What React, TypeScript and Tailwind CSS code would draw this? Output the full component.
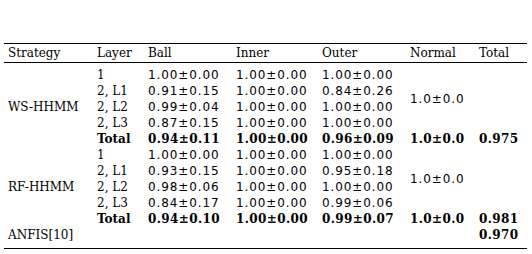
import React from 'react';

type Row = {
  layer: string;
  ball: string;
  inner: string;
  outer: string;
  bold?: boolean;
  total?: string;
};

const ws: Row[] = [
  { layer: '1', ball: '1.00±0.00', inner: '1.00±0.00', outer: '1.00±0.00' },
  { layer: '2, L1', ball: '0.91±0.15', inner: '1.00±0.00', outer: '0.84±0.26' },
  { layer: '2, L2', ball: '0.99±0.04', inner: '1.00±0.00', outer: '1.00±0.00' },
  { layer: '2, L3', ball: '0.87±0.15', inner: '1.00±0.00', outer: '1.00±0.00' },
  { layer: 'Total', ball: '0.94±0.11', inner: '1.00±0.00', outer: '0.96±0.09', bold: true, total: '0.975' },
];

const rf: Row[] = [
  { layer: '1', ball: '1.00±0.00', inner: '1.00±0.00', outer: '1.00±0.00' },
  { layer: '2, L1', ball: '0.93±0.15', inner: '1.00±0.00', outer: '0.95±0.18' },
  { layer: '2, L2', ball: '0.98±0.06', inner: '1.00±0.00', outer: '1.00±0.00' },
  { layer: '2, L3', ball: '0.84±0.17', inner: '1.00±0.00', outer: '0.99±0.06' },
  { layer: 'Total', ball: '0.94±0.10', inner: '1.00±0.00', outer: '0.99±0.07', bold: true, total: '0.981' },
];

const cell = 'pl-1 p-0 text-left align-middle whitespace-nowrap';
// plain numbers render in a wider sans face in the source
const num = "font-['DejaVu_Sans',sans-serif] tracking-[0.9px]";
const boldNum = 'tracking-[0.4px]';

function Group({ name, rows }: { name: string; rows: Row[] }) {
  return (
    <>
      {rows.map((r, i) => {
        const n = r.bold ? boldNum : num;
        return (
          <tr key={i} className={`h-4 ${r.bold ? 'font-bold' : ''}`}>
            {i === 0 && (
              <td rowSpan={5} className={cell}>
                {name}
              </td>
            )}
            <td className={cell}>{r.layer}</td>
            <td className={`${cell} ${n}`}>{r.ball}</td>
            <td className={`${cell} ${n}`}>{r.inner}</td>
            <td className={`${cell} ${n}`}>{r.outer}</td>
            {i === 0 && (
              <td rowSpan={4} className={`${cell} ${num}`}>
                1.0±0.0
              </td>
            )}
            {r.bold && <td className={`${cell} ${boldNum}`}>1.0±0.0</td>}
            <td className={`${cell} ${boldNum}`}>{r.total ?? ''}</td>
          </tr>
        );
      })}
    </>
  );
}

export default function App() {
  return (
    <div className="w-[532px] h-[254px] bg-white overflow-hidden pt-[43px] pl-1 font-['DejaVu_Serif',serif] text-[12px] leading-4 text-black">
      <table className="w-[523px] table-fixed border-collapse">
        <colgroup>
          <col className="w-[89px]" />
          <col className="w-[51px]" />
          <col className="w-[88px]" />
          <col className="w-[86px]" />
          <col className="w-[88px]" />
          <col className="w-[69px]" />
          <col className="w-[52px]" />
        </colgroup>
        <thead>
          <tr className="h-[19px] border-y border-black">
            <th className={`${cell} font-normal`}>Strategy</th>
            <th className={`${cell} font-normal`}>Layer</th>
            <th className={`${cell} font-normal`}>Ball</th>
            <th className={`${cell} font-normal`}>Inner</th>
            <th className={`${cell} font-normal`}>Outer</th>
            <th className={`${cell} font-normal`}>Normal</th>
            <th className={`${cell} font-normal`}>Total</th>
          </tr>
        </thead>
        <tbody>
          <tr className="h-1">
            <td colSpan={7} />
          </tr>
          <Group name="WS-HHMM" rows={ws} />
          <Group name="RF-HHMM" rows={rf} />
          <tr className="h-4 border-b border-black">
            <td className={`${cell} align-top pb-[5px]`}>ANFIS[10]</td>
            <td className={cell} />
            <td className={cell} />
            <td className={cell} />
            <td className={cell} />
            <td className={cell} />
            <td className={`${cell} ${boldNum} align-top pb-[5px] font-bold`}>0.970</td>
          </tr>
        </tbody>
      </table>
    </div>
  );
}
